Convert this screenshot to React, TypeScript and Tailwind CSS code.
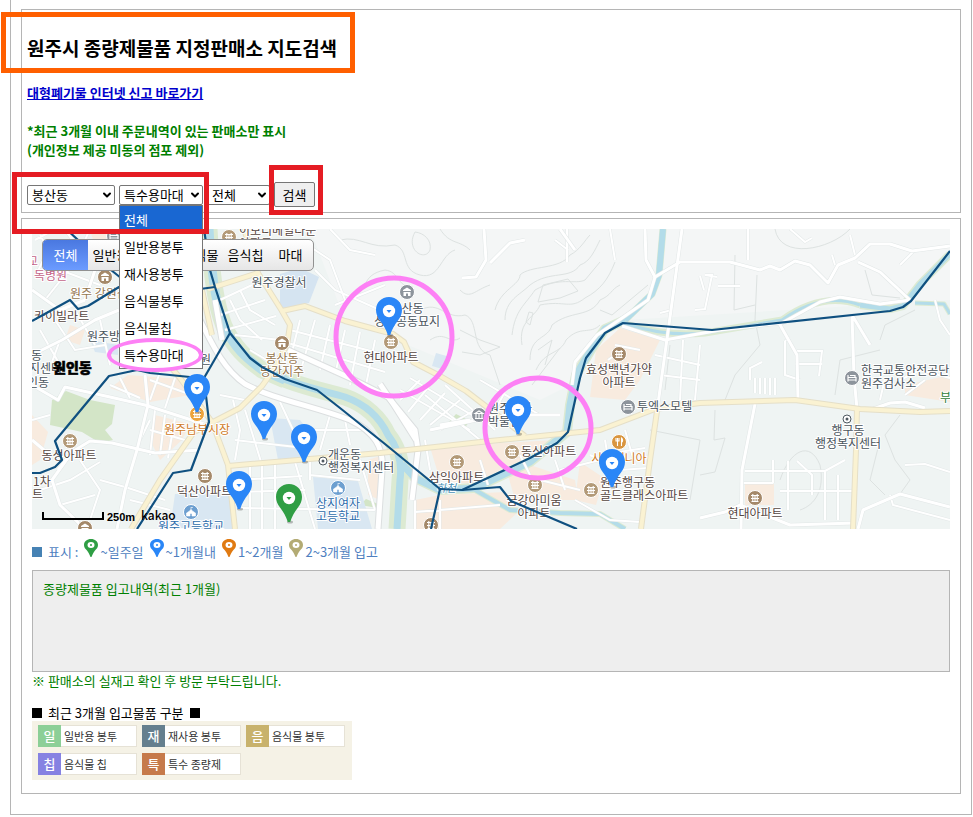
/**
 * 원주시 종량제물품 지정판매소 지도검색
 * 검색 폼 + 지도 + 입고 구분 범례
 */
import React, { useState } from 'react'
import { ChevronDown } from 'lucide-react'

// ── Map data ─────────────────────────────────────────────────────────

const BOUNDARIES = [
  'M32 473 H40 L55 467 L62 460 L55 441 L109 376 L137 370 L150 373 L190 377 L204 378 L209 422 L191 470 L173 473 L137 529',
  'M66 229 L77 239 L111 270 L121 278',
  'M32 321 L70 300 L78 309 L88 306 L119 287 L200 289 L215 287',
  'M204 229 L210 270 L215 287 L230 333 L250 358 L262 367 L285 379 L317 390 L340 408 L385 444 L440 489 L431 529',
  'M230 333 L204 378',
  'M440 489 L462 490 L500 487 L511 501 L577 529',
  'M462 490 L530 458 L557 443 L568 432 L580 378 L586 358 L605 333 L623 323 L712 330 L890 311 L903 307 L911 301 L950 251',
]

type River = { d: string; water: number; bank: number }

const RIVERS: River[] = [
  { d: 'M209 229 C211 265 214 300 224 326 C234 348 246 358 262 370 L285 380', water: 9, bank: 17 },
  { d: 'M275 375 C295 385 320 390 345 397 C365 404 380 418 388 435 C400 450 402 465 400 480 L397 529', water: 7, bank: 17 },
  { d: 'M663 229 L659 275 L652 294 L625 320', water: 6, bank: 7 },
  { d: 'M625 320 L605 329 L592 348 L576 375 L570 405 L567 432 L530 462 L475 488 L440 490 L415 478 L402 464', water: 7, bank: 10 },
  { d: 'M618 322 C650 331 670 336 705 333 L782 320 C810 300 835 296 860 305', water: 3, bank: 7 },
  { d: 'M860 305 L890 309 L903 306 L920 284 L950 254', water: 5, bank: 8 },
  { d: 'M475 490 L510 510 L560 513 L600 514 L625 529', water: 4, bank: 6 },
  { d: 'M915 303 L944 304 L950 314', water: 3, bank: 5 },
]

const YELLOW_ROADS = [
  'M131 529 L160 480 L194 432 L213 422 L240 408 L262 386 L272 372 L287 345',
  'M202 290 L212 335 M165 360 L180 378 L212 422 L228 465 L235 529',
  'M228 466 L380 453 L490 441 L600 430 L655 409 L700 403 L795 400 L860 409 L920 412 L950 411',
  'M857 409 L856 450 L853 529',
  'M657 411 L650 460 L641 529',
  'M208 289 L258 273 L282 311 L305 306 L345 321 L393 334 L404 342 L413 362 L440 376 L466 391 L505 421 L525 436',
  'M244 229 L258 273 M282 311 L290 325 L287 345',
]

const HIGHWAYS = [
  'M200 320 C215 350 225 370 245 384 C275 400 310 405 350 420 C375 432 384 448 382 470 L378 529',
  'M215 300 L222 340 M288 350 L350 378 L388 397 L415 430 L418 450 L412 500',
  'M380 384 L392 402 L416 440',
]

const WHITE_ROADS = [
  'M32 385 L58 400 L65 387 L110 397 L145 405 L204 424',
  'M32 440 L50 455 M58 470 L72 452 L90 441 L112 443 L155 453 L200 450',
  'M32 355 L62 340 L95 320 L119 310',
  'M85 529 L60 505 L52 480 L70 455',
  'M145 375 L148 405 L137 450 L125 490 L117 529',
  'M32 290 L60 310 L85 300 M65 229 L95 270 L85 300',
  'M645 229 L646 260 L655 277 L680 262 L730 262 L760 270 L770 266 L780 270 L795 261 L810 265 L828 283 L838 265 L855 258 L870 244 L890 244 L912 251 L950 246',
  'M682 229 L671 310 L657 411',
  'M655 277 L648 300 L622 318 L597 335 L575 362 L572 385',
  'M622 326 L665 340 L720 330 L782 323 L820 302 L840 297 L880 304 L910 300',
  'M779 323 L797 355 L798 400',
  'M857 409 L854 377 L852 315 L870 345',
  'M755 404 L742 470 L741 529',
  'M700 518 L725 512 L740 505 L790 525 L855 523',
  'M858 529 L863 510 L900 494 L950 507',
  'M858 262 L880 272 L910 300',
  'M870 410 L890 403 L905 402 L925 408',
  'M440 425 L470 420 M430 430 L500 415 L560 415',
  'M560 229 L575 250 M484 229 L486 260 L476 277 L462 278 M490 263 L510 243 L525 240',
]

const MINOR_ROADS = [
  'M40 235 L60 270 L100 285 M90 229 L75 262 L45 300 M55 320 L75 350 L105 345 M40 330 L60 365 M100 320 L110 365 M35 240 L55 229 M48 250 L36 275 M60 340 L52 362 M75 310 L95 345',
  'M32 420 L50 415 M80 460 L100 490 L90 520 M100 480 L125 487 L165 500 M130 500 L170 510 M150 420 L140 440 M150 430 L185 440 M40 490 L70 480 L100 462 M60 505 L95 495',
  'M155 410 L150 455 M165 415 L160 455 M175 418 L168 458 M150 380 L200 398 M160 372 L150 400 M175 378 L165 408 M110 385 L140 398 M120 378 L130 398',
  'M230 300 L240 320 L262 340 M240 290 L250 310 L275 325 M220 300 L252 285 M220 315 L265 300 M225 330 L276 316 M220 245 L250 256 M235 335 L280 340 M250 350 L270 362',
  'M300 320 L290 360 M315 320 L302 366 M330 325 L320 370 M345 330 L335 375 M360 332 L350 385 M290 330 L390 356 M288 343 L385 372 M375 340 L365 390',
  'M245 410 L262 465 M280 402 L300 445 M233 400 L240 430 L235 460 M235 440 L305 448 M330 415 L320 450 M345 420 L350 445 M310 430 L370 430 M220 395 L245 400',
  'M250 465 V529 M262 464 V529 M275 463 V529 M295 462 L315 529 M310 460 V480 M360 460 L375 510 M238 480 L302 476 M238 492 L305 490 M240 508 L375 510 M310 475 L360 480',
  'M420 380 L400 400 M430 385 L408 412 M445 393 L420 420 M460 400 L430 425 M475 410 L440 430 M400 390 L470 430 M410 378 L480 420 M425 440 L430 470 M480 380 L540 415',
  'M425 395 L480 440 M445 385 L495 430 M505 392 L495 410 M480 460 L488 485 M520 455 L530 475 M555 460 L565 490 M540 480 L580 490 M560 470 L600 460',
  'M605 440 L610 470 M625 430 L635 465 M600 455 L645 448 M590 455 L620 470 L648 468 M575 500 L610 520 L640 522 M415 500 V529 M440 500 V529 M415 512 L500 505',
  'M683 340 L680 400 M700 345 L695 400 M655 355 L700 365 M660 375 L700 380 M755 378 V393 M760 378 V394 M765 378 V394 M770 378 V395 M775 378 V395',
  'M700 276 L704 290 M705 275 L717 277 M718 286 H740 M660 313 L672 310 M695 310 L705 309 L712 275 H705 M748 229 V260 M615 345 L640 350 M608 360 L622 350',
  'M790 229 L805 242 L812 238 M855 255 L850 235 M835 265 L832 255 M610 229 L615 260 M555 240 L568 250 M567 229 V262',
  'M900 380 L920 370 L950 378 M905 395 L925 380 M880 400 L885 378 M905 465 L925 464 L950 472 M890 495 L893 505 L950 520',
  'M745 471 H825 M741 483 H773 M780 491 H853 M773 460 V483 M788 461 V510 M797 461 L812 475 V495 M825 471 V520 M838 475 V520 M825 471 L845 460',
  'M797 351 H822 L819 376 M795 364 H822 M785 341 V375 L800 380 M785 341 L790 338 M750 380 V368 L762 362',
  'M300 240 L330 260 L345 300 M330 229 L350 250 L375 255 M315 270 L335 290 L380 310 M335 305 L385 285 M900 265 L915 250 M935 300 L940 320 L950 335',
]

// 등고선
const CONTOURS = [
  'M340 240 C360 235 370 250 395 245 C410 250 400 270 420 275 C440 280 440 255 455 250',
  'M350 300 C370 290 360 275 385 270 C400 272 395 285 415 290',
  'M415 232 C405 250 425 262 430 250 C432 240 424 233 415 232 Z M440 229 C450 245 460 240 470 250',
  'M420 310 C440 300 445 320 465 315 C480 320 470 350 490 355 L500 385',
  'M460 290 C470 300 475 290 490 285 M430 340 C445 330 450 345 460 338',
  'M495 310 C500 290 520 285 520 275 C530 265 560 270 570 255 C580 250 585 240 590 235',
  'M505 320 C505 300 520 295 530 285 C550 270 570 280 580 265 C590 262 595 250 600 240',
  'M512 335 C515 310 525 305 535 290 C560 276 575 285 585 280 L600 262',
  'M522 345 C518 320 535 318 540 305 C565 300 570 310 585 298 C600 290 608 280 615 262',
  'M530 360 C530 335 548 340 552 325 C570 310 590 318 600 300 C612 295 610 290 620 285',
  'M536 370 C545 350 560 355 566 340 C580 325 590 335 600 325',
  'M460 330 L480 340 L500 347 L480 355 L462 352',
  'M532 385 L560 348 M538 350 L552 340 L545 365',
  'M538 302 L543 285 L568 279 L578 291 L560 298 Z',
  'M526 322 L529 312 L533 313 L530 325 Z',
  'M735 255 L734 310 L755 305 M757 275 L755 320 L760 345 L735 375 L725 400',
  'M715 410 L714 440 L725 438 L715 472 L700 475 M865 270 L872 295 L900 298',
  'M880 340 L885 325 L915 310 M835 395 L840 360 L880 350 M900 415 L885 435 L895 460 L910 480 L900 494',
  'M780 480 C790 450 810 440 820 465 C825 490 815 505 800 510 M600 310 L612 315 L648 285 M775 229 C780 260 830 250 850 229',
  'M670 345 L665 390 M650 430 L700 440 L690 500 M880 440 L870 480 L885 495',
]

const BLOCKS: [string, string][] = [
  ['#d3e5c7', 'M52 400 L66 391 L74 394 L90 400 L115 405 L112 424 L105 430 L113 440 L100 443 L82 432 L50 425 Z'],
  ['#d3e5c7', 'M448 423 L456 414 L470 421 L466 426 Z M360 505 L366 499 L378 504 V508 Z'],
  ['#d5e4f1', 'M280 274 L300 268 L319 277 L309 303 L280 309 Z'],
  ['#d9e7f2', 'M270 418 L300 420 L312 434 L305 460 L278 460 Z M313 477 L358 481 L372 529 H318 Z M175 494 H232 V529 H170 Z'],
  ['#d9e7f2', 'M436 353 L450 357 L446 370 L432 366 Z M90 340 L118 345 V355 L95 352 Z'],
  ['#f8ebdf', 'M110 388 L128 375 L195 380 L190 395 L150 402 Z M155 415 L190 424 L182 440 L160 460 L150 440 Z'],
  ['#f8ebdf', 'M32 415 L48 432 L40 460 L32 465 Z M70 325 L85 330 L80 345 L65 340 Z M90 230 L118 232 V270 L100 262 Z'],
  ['#f8ebdf', 'M430 447 L555 440 L545 450 L470 484 L440 480 Z M508 475 L530 465 L575 480 L578 500 H515 Z'],
  ['#f8ebdf', 'M415 500 L440 495 L505 492 L520 510 L500 529 H415 Z M580 462 L604 478 L596 505 L575 500 Z M368 460 L380 456 V500 L368 495 Z'],
  ['#f8ebdf', 'M620 328 L660 340 L640 380 L625 400 L590 397 L596 350 Z M745 484 H774 V505 H745 Z M905 385 L950 375 V402 L905 395 Z'],
]

type Poi = { x: number; y: number; color: string; kind: 'apt' | 'house' | 'museum' | 'bed' | 'food' | 'school' }

const POIS: Poi[] = [
  { x: 229, y: 237, color: '#b39a78', kind: 'apt' },
  { x: 105, y: 277, color: '#a5896a', kind: 'house' },
  { x: 114, y: 236, color: '#8d949c', kind: 'bed' },
  { x: 282, y: 343, color: '#a5896a', kind: 'house' },
  { x: 391, y: 342, color: '#b39a78', kind: 'apt' },
  { x: 407, y: 292, color: '#8d949c', kind: 'house' },
  { x: 512, y: 452, color: '#b39a78', kind: 'apt' },
  { x: 535, y: 485, color: '#b39a78', kind: 'apt' },
  { x: 591, y: 490, color: '#b39a78', kind: 'apt' },
  { x: 619, y: 354, color: '#a5896a', kind: 'apt' },
  { x: 457, y: 462, color: '#b39a78', kind: 'apt' },
  { x: 431, y: 525, color: '#a5896a', kind: 'apt' },
  { x: 205, y: 476, color: '#a5896a', kind: 'apt' },
  { x: 70, y: 441, color: '#b39a78', kind: 'apt' },
  { x: 85, y: 528, color: '#a5896a', kind: 'house' },
  { x: 755, y: 498, color: '#a5896a', kind: 'apt' },
  { x: 479, y: 415, color: '#8d949c', kind: 'museum' },
  { x: 628, y: 407, color: '#8d949c', kind: 'bed' },
  { x: 852, y: 378, color: '#8d949c', kind: 'bed' },
  { x: 338, y: 488, color: '#6d9fd0', kind: 'school' },
  { x: 191, y: 512, color: '#6d9fd0', kind: 'school' },
  { x: 197, y: 414, color: '#eda43c', kind: 'apt' },
  { x: 619, y: 442, color: '#d9953f', kind: 'food' },
]

type Label = { t: string; x: number; y: number; c?: string; mid?: boolean }

const APT = '#54463f'
const ORANGE = '#cf7a1f'
const SCHOOL = '#2c6cab'
const SITE = '#94764f'

const LABELS: Label[] = [
  { t: '이보디메일타운', x: 239, y: 235, c: APT },
  { t: '아파트', x: 239, y: 248, c: APT },
  { t: '교', x: 27, y: 266, c: '#c4668a' },
  { t: '독병원', x: 34, y: 280, c: '#c4668a' },
  { t: '원주 강원감영', x: 70, y: 298, c: SITE },
  { t: '카이빌라트', x: 34, y: 321, c: APT },
  { t: '원주방송', x: 87, y: 341 },
  { t: '원', x: 200, y: 364 },
  { t: '동', x: 31, y: 360 },
  { t: '지센터', x: 29, y: 373 },
  { t: '인동', x: 27, y: 387 },
  { t: '봉산동', x: 282, y: 363, c: SITE, mid: true },
  { t: '당간지주', x: 282, y: 376, c: SITE, mid: true },
  { t: '봉산동', x: 407, y: 313, mid: true },
  { t: '성황공동묘지', x: 407, y: 326, mid: true },
  { t: '현대아파트', x: 391, y: 362, c: APT, mid: true },
  { t: '원주경찰서', x: 279, y: 287, mid: true },
  { t: '원주역사', x: 488, y: 413 },
  { t: '박물관', x: 488, y: 426 },
  { t: '동신아파트', x: 521, y: 456, c: APT },
  { t: '금강아미움', x: 534, y: 505, c: APT, mid: true },
  { t: '아파트', x: 534, y: 518, c: APT, mid: true },
  { t: '원주행구동', x: 600, y: 487, c: APT },
  { t: '골드클래스아파트', x: 600, y: 500, c: APT },
  { t: '사르데니아', x: 619, y: 463, c: ORANGE, mid: true },
  { t: '투엑스모텔', x: 637, y: 411 },
  { t: '효성백년가약', x: 619, y: 374, c: APT, mid: true },
  { t: '아파트', x: 619, y: 387, c: APT, mid: true },
  { t: '한국교통안전공단', x: 861, y: 375 },
  { t: '원주검사소', x: 861, y: 388 },
  { t: '부', x: 940, y: 402, c: '#2f7d3b' },
  { t: '행구동', x: 848, y: 435, mid: true },
  { t: '행정복지센터', x: 848, y: 448, mid: true },
  { t: '현대아파트', x: 755, y: 518, c: APT, mid: true },
  { t: '개운동', x: 328, y: 459 },
  { t: '행정복지센터', x: 328, y: 472 },
  { t: '상지여자', x: 338, y: 508, c: SCHOOL, mid: true },
  { t: '고등학교', x: 338, y: 521, c: SCHOOL, mid: true },
  { t: '삼익아파트', x: 429, y: 482, c: APT },
  { t: '덕산아파트', x: 177, y: 496, c: APT },
  { t: '동성아파트', x: 69, y: 460, c: APT, mid: true },
  { t: '원주남부시장', x: 197, y: 434, c: ORANGE, mid: true },
  { t: '원주고등학교', x: 191, y: 531, c: SCHOOL, mid: true },
  { t: '1차', x: 33, y: 486, c: APT },
  { t: '트', x: 32, y: 499, c: APT },
]

const PINS = [
  { x: 389, y: 311, color: '#2a86f7' },
  { x: 197, y: 388, color: '#2a86f7' },
  { x: 264, y: 415, color: '#2a86f7' },
  { x: 304, y: 438, color: '#2a86f7' },
  { x: 239, y: 485, color: '#2a86f7' },
  { x: 289, y: 498, color: '#2f9e44' },
  { x: 518, y: 410, color: '#2a86f7' },
  { x: 612, y: 463, color: '#2a86f7' },
]

// ── Map pieces ───────────────────────────────────────────────────────

function PoiIcon({ x, y, color, kind }: Poi) {
  return (
    <g transform={`translate(${x} ${y})`}>
      <circle r="7.5" fill={color} stroke="#fff" strokeWidth="1" />
      {kind === 'apt' && (
        <path d="M-4 -2.5 H4 M-4 0.5 H4 M-3.5 3.5 H3.5 M-2.2 -4 V4 M2.2 -4 V4 M0 -2 V3" stroke="#fff" strokeWidth="1.1" fill="none" />
      )}
      {kind === 'house' && (
        <path d="M-4 -2 L0 -4.5 L4 -2 V-1 H-4 Z M-3.5 0 H3.5 V4 H1 V1.5 H-1 V4 H-3.5 Z" fill="#fff" />
      )}
      {kind === 'museum' && (
        <path d="M-4 -1.5 L0 -4 L4 -1.5 Z M-3 -1 V3 M0 -1 V3 M3 -1 V3 M-4 3.5 H4" fill="none" stroke="#fff" strokeWidth="1.1" />
      )}
      {kind === 'bed' && (
        <path d="M-4 -3 V3.5 M-4 2 H4 V-0.5 H-4 M4 3.5 V-0.5 M-2 -2.5 H3 V-0.5" stroke="#fff" strokeWidth="1.2" fill="none" />
      )}
      {kind === 'food' && (
        <path d="M-3 -4 V-1 H0 V-4 M-1.5 -4 V4 M2.5 4 V-4 C4 -3 4 0 2.5 0" stroke="#fff" strokeWidth="1.1" fill="none" />
      )}
      {kind === 'school' && (
        <path d="M0 -5 V-2 M0 -4.5 H2 M-4.5 4 V1 L-2 -0.5 L0 -2.5 L2 -0.5 L4.5 1 V4 H1 V1.5 H-1 V4 Z" fill="#fff" stroke="#fff" strokeWidth="0.6" />
      )}
    </g>
  )
}

function MapPin({ x, y, color }: { x: number; y: number; color: string }) {
  return (
    <g transform={`translate(${x} ${y})`}>
      <ellipse cx="1" cy="24" rx="3" ry="1.5" fill="#00000040" />
      <path d="M0 -14 C7.5 -14 13 -8.5 13 -1 C13 3 11.5 6 9 9.5 C6 13.5 3 18 1.2 24 H-1.2 C-3 18 -6 13.5 -9 9.5 C-11.5 6 -13 3 -13 -1 C-13 -8.5 -7.5 -14 0 -14 Z" fill={color} />
      <circle r="6.2" fill="#fff" />
      <path d="M-2.5 -1 H2.5 L0 2 Z" fill={color} />
    </g>
  )
}

function StoreMap() {
  return (
    <svg
      viewBox="32 229 918 300"
      preserveAspectRatio="xMinYMin slice"
      className="block h-[300px] w-full"
      role="img"
      aria-label="판매소 지도"
    >
      <rect x="32" y="229" width="918" height="300" fill="#eff4f3" />
      <path d="M310 229 H950 V300 L625 320 L580 380 L540 400 L420 350 L345 320 Z" fill="#f4f6f6" />

      {CONTOURS.map(d => <path key={d} d={d} fill="none" stroke="#dde2e1" strokeWidth="1" />)}
      {BLOCKS.map(([fill, d]) => <path key={d} d={d} fill={fill} />)}
      {RIVERS.map(r => <path key={r.d} d={r.d} fill="none" stroke="#dcead2" strokeWidth={r.bank} strokeLinejoin="round" />)}
      {RIVERS.map(r => <path key={r.d} d={r.d} fill="none" stroke="#b3dce9" strokeWidth={r.water} strokeLinejoin="round" />)}

      {MINOR_ROADS.map(d => <path key={d} d={d} fill="none" stroke="#e3e8e8" strokeWidth="3" />)}
      {MINOR_ROADS.map(d => <path key={d} d={d} fill="none" stroke="#fff" strokeWidth="2" />)}
      {WHITE_ROADS.map(d => <path key={d} d={d} fill="none" stroke="#e2e7e7" strokeWidth="4" strokeLinejoin="round" />)}
      {WHITE_ROADS.map(d => <path key={d} d={d} fill="none" stroke="#fff" strokeWidth="3" strokeLinejoin="round" />)}
      {HIGHWAYS.map(d => <path key={d} d={d} fill="none" stroke="#dcdfe0" strokeWidth="7" strokeLinejoin="round" />)}
      {HIGHWAYS.map(d => <path key={d} d={d} fill="none" stroke="#fff" strokeWidth="5" strokeLinejoin="round" />)}
      {YELLOW_ROADS.map(d => <path key={d} d={d} fill="none" stroke="#e5dfc8" strokeWidth="6" strokeLinejoin="round" />)}
      {YELLOW_ROADS.map(d => <path key={d} d={d} fill="none" stroke="#faf2d2" strokeWidth="4" strokeLinejoin="round" />)}

      {POIS.map(p => <PoiIcon key={`${p.x}-${p.y}`} {...p} />)}
      {[[323, 461], [847, 419]].map(([x, y]) => (
        <g key={x}>
          <circle cx={x} cy={y} r="4" fill="#fff" stroke="#4f5961" strokeWidth="1" />
          <circle cx={x} cy={y} r="1.5" fill="#4f5961" />
        </g>
      ))}

      <g fontSize="12" stroke="#fff" strokeWidth="2" strokeLinejoin="round" style={{ paintOrder: 'stroke' }}>
        {LABELS.map(l => (
          <text key={`${l.t}-${l.x}-${l.y}`} x={l.x} y={l.y} fill={l.c || '#4a545c'} textAnchor={l.mid ? 'middle' : 'start'}>
            {l.t}
          </text>
        ))}
        <text x="436" y="492" fontSize="11" fill="#4a93b8" fontStyle="italic">하천</text>
      </g>

      {BOUNDARIES.map(d => <path key={d} d={d} fill="none" stroke="#0f5080" strokeWidth="2.2" strokeLinejoin="round" />)}

      <text x="53" y="373" fontSize="14" fontWeight="900" fill="#000" stroke="#000" strokeWidth="0.6">원인동</text>

      {PINS.map(p => <MapPin key={`${p.x}-${p.y}`} {...p} />)}

      {/* scale bar */}
      <path d="M43 512 V519 H103 V512" fill="none" stroke="#000" strokeWidth="2" />
      <text x="107" y="521" fontSize="11" fontWeight="700" className="font-['Liberation_Sans',sans-serif]">250m</text>
      <text x="141" y="520" fontSize="12" fontWeight="500">kakao</text>

      <ellipse cx="394" cy="337" rx="58" ry="59" fill="none" stroke="#fd80f5" strokeWidth="5" />
      <ellipse cx="538" cy="428" rx="53" ry="50" fill="none" stroke="#fd80f5" strokeWidth="5" />
    </svg>
  )
}

// ── Form controls ────────────────────────────────────────────────────

function SelectBox({ label, value, options, onChange, width }: {
  label: string; value: string; options: string[]; onChange: (v: string) => void; width: string
}) {
  return (
    <span className={`relative inline-block ${width}`}>
      <select
        aria-label={label}
        value={value}
        onChange={e => onChange(e.target.value)}
        className="block h-5 w-full appearance-none rounded-xs border border-[#767676] bg-white pl-1 text-[13px] leading-[17px] text-black"
      >
        {options.map(o => <option key={o}>{o}</option>)}
      </select>
      <ChevronDown className="pointer-events-none absolute right-0.5 top-1 h-3 w-3" strokeWidth={4} />
    </span>
  )
}

const ITEMS = ['전체', '일반용봉투', '재사용봉투', '음식물봉투', '음식물칩', '특수용마대']
const TABS = ['전체', '일반용', '재사용', '음식물', '음식칩', '마대']

const PERIODS = [
  { text: '~일주일', color: '#2f9e44' },
  { text: '~1개월내', color: '#2a86f7' },
  { text: '1~2개월', color: '#e07a12' },
  { text: '2~3개월 입고', color: '#b3ab74' },
]

const KINDS = [
  { mark: '일', text: '일반용 봉투', bg: 'bg-[#8ccf97]' },
  { mark: '재', text: '재사용 봉투', bg: 'bg-[#657f8e]' },
  { mark: '음', text: '음식물 봉투', bg: 'bg-[#c8b26c]' },
  { mark: '칩', text: '음식물 칩', bg: 'bg-[#8682e2]' },
  { mark: '특', text: '특수 종량제', bg: 'bg-[#c67a4b]' },
]

// ── Page ─────────────────────────────────────────────────────────────

export default function App() {
  const [dong, setDong] = useState('봉산동')
  const [item, setItem] = useState('특수용마대')
  const [period, setPeriod] = useState('전체')
  const [hovered, setHovered] = useState('전체')
  const [tab, setTab] = useState('전체')

  return (
    <div className="bg-white font-['Noto_Sans_CJK_KR','Noto_Sans',sans-serif] text-[13px] text-black">
      <div className="ml-2.5 mr-px border-x border-b border-[#b5b5b5] px-2.5 pb-5 pt-[9px]">
        <section className="border border-[#b5b5b5] px-[5px] pb-[5px]">
          <div className="relative w-fit pt-6">
            <h1 className="text-[19px] font-bold leading-7">원주시 종량제물품 지정판매소 지도검색</h1>
            <div className="pointer-events-none absolute -left-[26px] -right-[18px] top-0.5 h-[61px] border-5 border-[#ff5f00]" />
          </div>
          <p className="mt-[21px] leading-5">
            <a href="#report" className="font-bold text-[#0000cc] underline">대형폐기물 인터넷 신고 바로가기</a>
          </p>
          <p className="mt-[18px] font-bold leading-[19px] text-[#008000]">
            *최근 3개월 이내 주문내역이 있는 판매소만 표시<br />
            (개인정보 제공 미동의 점포 제외)
          </p>

          <form className="mt-[23px] flex items-center gap-1" onSubmit={e => e.preventDefault()}>
            <SelectBox label="동" value={dong} options={['봉산동', '원인동', '행구동']} onChange={setDong} width="w-[88px]" />
            <div className="relative">
              <SelectBox label="품목" value={item} options={ITEMS} onChange={setItem} width="w-[84px]" />
              <ul className="absolute left-0 top-full z-10 w-[84px] border border-[#767676] bg-white">
                {ITEMS.map(name => (
                  <li
                    key={name}
                    onMouseEnter={() => setHovered(name)}
                    onClick={() => setItem(name)}
                    className={`h-[27px] whitespace-nowrap pl-1 leading-[27px] ${hovered === name ? 'bg-[#1967d2] text-white' : ''}`}
                  >
                    {name}
                  </li>
                ))}
              </ul>
              <div className="pointer-events-none absolute -left-3 top-[153px] z-20 h-[34px] w-24 rounded-[50%] border-4 border-[#fd80f5]" />
              <div className="pointer-events-none absolute -left-[107px] -top-[13px] z-20 h-[62px] w-[197px] border-5 border-[#e51c23]" />
            </div>
            <SelectBox label="기간" value={period} options={['전체', '1개월', '3개월']} onChange={setPeriod} width="w-[63px]" />
            <div className="relative">
              <button type="submit" className="block h-[25px] w-[41px] rounded-xs border border-[#767676] bg-[#efefef]">검색</button>
              <div className="pointer-events-none absolute -bottom-2 -left-[5px] -right-2 -top-[17px] z-20 border-5 border-[#e51c23]" />
            </div>
          </form>
        </section>

        <section className="mt-[5px] border border-[#b5b5b5] px-2.5 pb-[13px] pt-2.5">
          <div className="relative">
            <StoreMap />
            <div className="absolute left-2.5 top-2.5 flex h-8 overflow-hidden rounded-[5px] border border-[#919191] bg-linear-to-b from-white to-[#e6e6e6]">
              {TABS.map(name => (
                <button
                  key={name}
                  type="button"
                  onClick={() => setTab(name)}
                  className={`w-[45px] ${tab === name ? 'bg-linear-to-b from-[#4a78e0] to-[#6b9bff] text-white' : ''}`}
                >
                  {name}
                </button>
              ))}
            </div>
          </div>

          <div className="mt-2 flex h-[33px] items-start gap-1.5 text-[#4f7fbf]">
            <span className="flex items-center gap-1.5 pt-[5px] leading-5">
              <span className="h-2.5 w-2.5 bg-[#4682b4]" />
              표시 :
            </span>
            {PERIODS.map(p => (
              <span key={p.text} className="flex gap-0.5">
                <svg viewBox="0 0 14 18" className="mt-0.5 h-[18px] w-3.5" aria-hidden="true">
                  <path d="M7 0 C11 0 14 2.5 14 6 C14 8.5 12.5 10 11 11.5 C9.5 13.5 8.5 15.5 7.5 18 H6.500 C5.500 15.500 4.500 13.500 3 11.500 C1.500 10 0 8.500 0 6 C0 2.500 3 0 7 0 Z" fill={p.color} />
                  <ellipse cx="7" cy="6" rx="3.500" ry="3" fill="#fff" />
                  <circle cx="7" cy="6" r="1" fill={p.color} />
                </svg>
                <span className="pt-[5px] leading-5">{p.text}</span>
              </span>
            ))}
          </div>

          <div className="h-[102px] border border-[#b5b5b5] bg-[#eeeeee] px-2.5 py-2 leading-5 text-[#008000]">
            종량제물품 입고내역(최근 1개월)
          </div>
          <p className="leading-[18px] text-[#008000]">※ 판매소의 실재고 확인 후 방문 부탁드립니다.</p>

          <h2 className="mt-3.5 flex items-center gap-1.5 leading-[17px]">
            <span className="h-2.5 w-2.5 bg-black" />
            최근 3개월 입고물품 구분
            <span className="h-2.5 w-2.5 bg-black" />
          </h2>
          <ul className="grid h-[59px] w-80 grid-cols-[99px_99px_99px] content-start gap-x-[5px] gap-y-1.5 bg-[#f5f2e6] px-1.5 pt-1 text-[11px]">
            {KINDS.map(k => (
              <li key={k.mark} className="flex h-[22px] items-center border border-[#e6e2d6] bg-white">
                <span className={`-my-px -ml-px flex h-[22px] w-[23px] items-center justify-center text-[13px] font-medium text-white ${k.bg}`}>
                  {k.mark}
                </span>
                <span className="pl-[3px] text-[#333]">{k.text}</span>
              </li>
            ))}
          </ul>
        </section>
      </div>
    </div>
  )
}
